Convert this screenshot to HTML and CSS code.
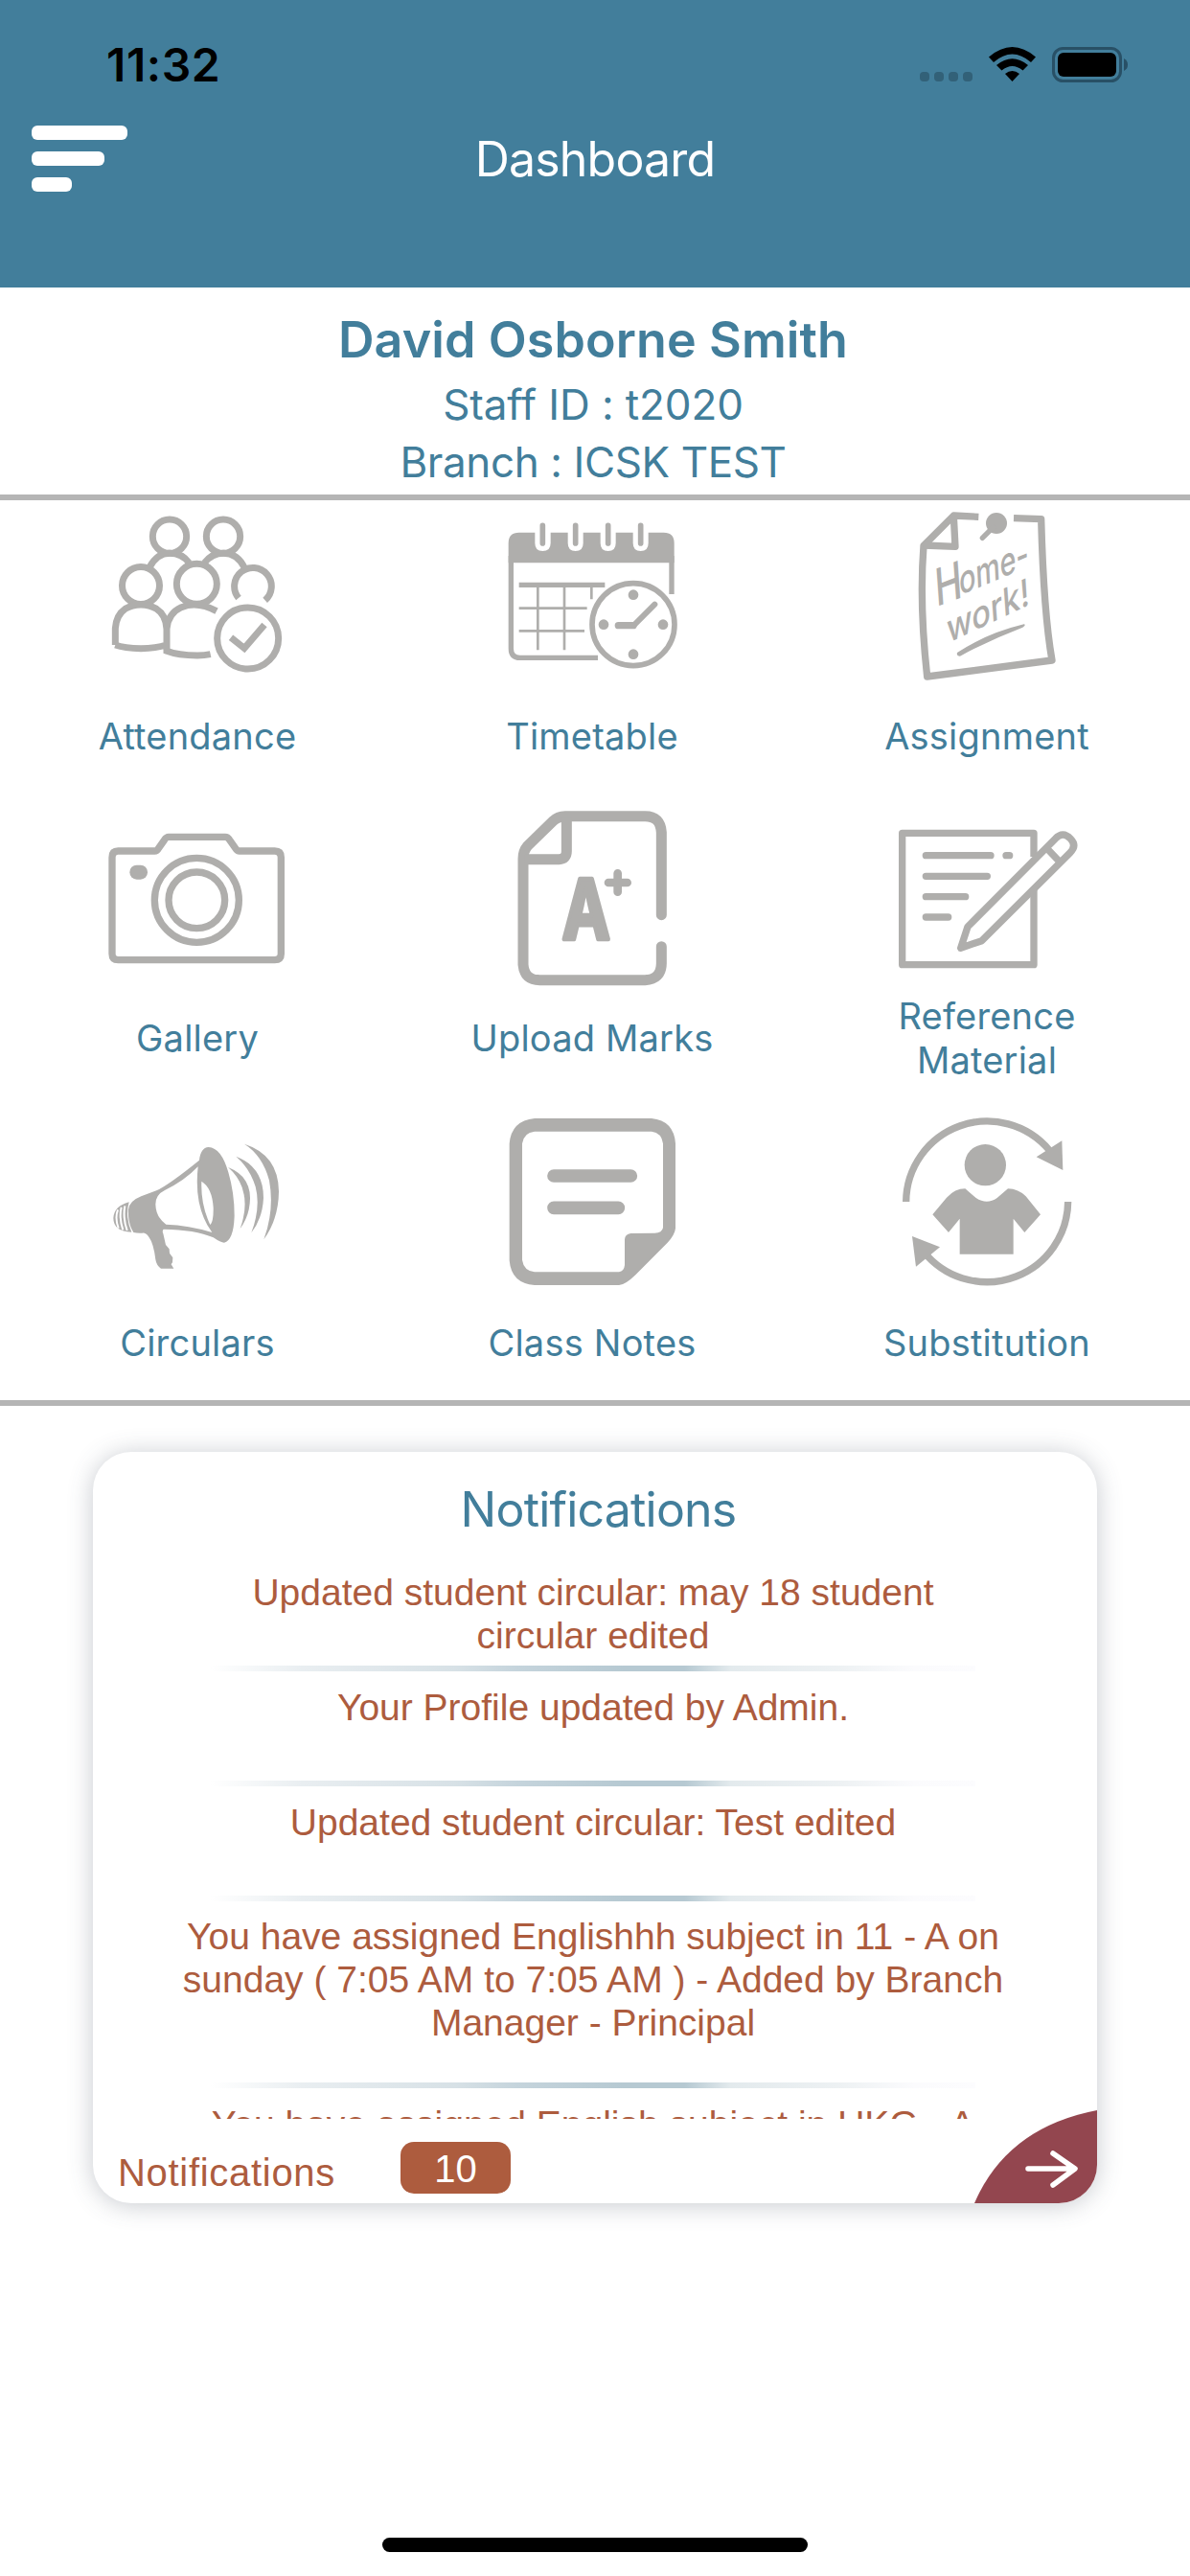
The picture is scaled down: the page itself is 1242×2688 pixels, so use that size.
FILE: index.html
```html
<!DOCTYPE html>
<html lang="en">
<head>
    <meta charset="UTF-8">
    <meta name="viewport" content="width=device-width, initial-scale=1.0">
    <title>Dashboard</title>
    <link rel="stylesheet" href="styles.css">
</head>
<body>
    <div class="screen">
        <header class="header">
            <div class="status-bar">
                <span class="time">11:32</span>
                <svg class="status-icons" width="220" height="40" viewBox="0 0 220 40">
                    <g fill="#326178">
                        <rect x="0" y="27" width="10" height="10" rx="4"/>
                        <rect x="15" y="27" width="10" height="10" rx="4"/>
                        <rect x="30" y="27" width="10" height="10" rx="4"/>
                        <rect x="45" y="27" width="10" height="10" rx="4"/>
                    </g>
                    <path d="M72 11.500Q96.500 -9.500 121 11.500L116 17Q96.500 0 77 17Z"/>
                    <path d="M80 20Q96.500 6.500 113 20L107.500 25.500Q96.500 16.500 85.500 25.500Z"/>
                    <path d="M89 29Q96.500 23 104 29L96.500 37Z"/>
                    <rect x="139.500" y="2.500" width="70" height="34" rx="10" fill="none" stroke="#285066" stroke-width="3"/>
                    <rect x="144" y="7" width="61" height="25" rx="6"/>
                    <path d="M213 13Q217 15 217 19.500Q217 24 213 26Z" fill="#285066"/>
                </svg>
            </div>
            <div class="nav-bar">
                <div class="menu">
                    <span></span>
                    <span></span>
                    <span></span>
                </div>
                <h1>Dashboard</h1>
            </div>
        </header>

        <section class="profile">
            <h2>David Osborne Smith</h2>
            <p class="staff">Staff ID : t2020</p>
            <p class="branch">Branch : ICSK TEST</p>
        </section>

        <main class="menu-grid">
            <a class="tile">
                <svg class="icon" viewBox="78 6 600 600">
                    <g class="line" stroke-width="21">
                        <circle cx="291" cy="119" r="53"/>
                        <circle cx="459" cy="119" r="53"/>
                        <path d="M228 216Q252 172 291 172Q330 172 352 202M400 202Q424 172 460 172Q502 172 525 216"/>
                        <circle cx="201" cy="273" r="58.500"/>
                        <circle cx="376" cy="268" r="63"/>
                        <path d="M507 312A58 58 0 1 1 590 319"/>
                        <path d="M121 459V407Q124 365 152 346Q174 333 201 333Q228 333 250 346Q280 365 282 409V478Q318 492 378 492Q400 492 419 488M282 409Q286 360 328 341Q378 321 438 353M121 459Q150 469 201 470Q250 469 280 459"/>
                        <circle cx="536" cy="438" r="96"/>
                        <path d="M483 436L525 469L588 396"/>
                    </g>
                </svg>
                <span class="label">Attendance</span>
            </a>
            <a class="tile">
                <svg class="icon" viewBox="84 6 600 600">
                    <path class="line" stroke-width="16" d="M130 180V470Q130 499 158 499H402M633 180V300"/>
                    <path class="fill" d="M122 202V140Q122 107 155 107H205V140Q205 165 229 165Q254 165 254 140V107H308V140Q308 165 332 165Q356 165 356 140V107H410V140Q410 165 434 165Q458 165 458 140V107H512V140Q512 165 536 165Q560 165 560 140V107H608Q641 107 641 140V202Z"/>
                    <path class="line round" stroke-width="17" d="M229 85V141M332 85V141M434 85V141M536 85V141"/>
                    <path class="line" stroke-width="16" d="M155 271H424"/>
                    <path class="line" stroke-width="8" d="M155 344H368M155 415H360M214 276V475M297 276V475M382 276V316"/>
                    <circle class="line" stroke-width="17" cx="513" cy="395" r="129"/>
                    <g class="fill">
                        <circle cx="513" cy="302" r="16"/>
                        <circle cx="420" cy="395" r="16"/>
                        <circle cx="606" cy="395" r="16"/>
                        <circle cx="513" cy="488" r="16"/>
                    </g>
                    <path class="line round" stroke-width="18" d="M580 332L515 397"/>
                    <path class="line round" stroke-width="22" d="M466 398H513"/>
                </svg>
                <span class="label">Timetable</span>
            </a>
            <a class="tile">
                <svg class="icon" viewBox="90 6 600 600">
                    <path class="line join" stroke-width="22" d="M364 58L286 54L192 148Q178 330 203 558L594 507Q568 360 560 65L474 62"/>
                    <path class="line join" stroke-width="22" d="M286 56L291 151L192 147"/>
                    <circle class="fill" cx="420" cy="78" r="33"/>
                    <path class="line round" stroke-width="16" d="M410 90L376 124"/>
                    <g class="hand">
                        <text font-size="164" textLength="84" transform="translate(232 340) skewY(-17) rotate(-4)" lengthAdjust="spacingAndGlyphs">H</text>
                        <text font-size="124" textLength="218" transform="translate(305 304) skewY(-20) rotate(-3)" lengthAdjust="spacingAndGlyphs">ome-</text>
                        <text font-size="122" textLength="258" transform="translate(268 454) skewY(-22) rotate(-4)" lengthAdjust="spacingAndGlyphs">work!</text>
                    </g>
                    <path class="fill" d="M297 483Q390 422 506 394Q514 396 502 404Q400 443 306 494Q294 494 297 483Z"/>
                </svg>
                <span class="label">Assignment</span>
            </a>
            <a class="tile">
                <svg class="icon" viewBox="78 21 600 600">
                    <g class="line" stroke-width="22">
                        <path d="M130 174H244Q252 174 256 166L275 139Q281 130 288 130H465Q473 130 478 138L499 168Q503 174 510 174H620Q640 174 640 194V496Q640 515 620 515H130Q111 515 111 496V194Q111 174 130 174Z"/>
                        <circle cx="376" cy="328" r="132"/>
                        <circle cx="376" cy="328" r="88"/>
                    </g>
                    <rect class="fill" x="166" y="218" width="56" height="45" rx="22"/>
                </svg>
                <span class="label">Gallery</span>
            </a>
            <a class="tile">
                <svg class="icon" viewBox="84 21 600 600">
                    <path class="line round" stroke-width="33" d="M601 374V116Q598 65 550 65H300Q276 66 262 80L182 158Q168 174 168 198V530Q172 578 220 578H550Q600 576 601 526V473"/>
                    <path class="line" stroke-width="33" d="M304 70V175Q304 199 280 200H172"/>
                    <text class="grade" x="290" y="449" font-size="258" textLength="150" lengthAdjust="spacingAndGlyphs">A</text>
                    <path class="line round" stroke-width="26" d="M464 244V302M435 273H494"/>
                </svg>
                <span class="label">Upload Marks</span>
            </a>
            <a class="tile">
                <svg class="icon" viewBox="90 21 600 600">
                    <g class="line join" stroke-width="22">
                        <path d="M537 192V118H125V530H537V294"/>
                        <path d="M308 478L330 411L604 136Q628 110 652 136Q673 158 650 180L374 455ZM580 168L615 205"/>
                    </g>
                    <path class="line round" stroke-width="22" d="M199 188H402M450 188H461M199 253H391M199 317H323M199 381H269"/>
                </svg>
                <span class="label">Reference<br>Material</span>
            </a>
            <a class="tile">
                <svg class="icon" viewBox="78 15 600 600">
                    <g class="fill">
                        <path fill-rule="evenodd" d="M384 182Q388 143 413 141Q453 143 475 220Q494 285 494 355Q492 432 462 440Q451 440 428 424Q370 399 272 398Q267 403 271 412L279 447L290 460L291 473L301 487L300 502L296 508L304 521H264Q250 512 247 493Q241 442 226 422Q216 408 205 410Q190 411 178 408Q160 380 162 337Q164 310 202 295L250 277Q290 258 384 182ZM380 202Q338 246 276 276Q247 290 247 320Q248 360 280 383Q350 385 424 408Q366 330 380 202ZM391 248Q388 320 418 384Q429 374 428 330Q424 268 391 248Z"/>
                        <path d="M164 313Q151 359 172 407Q115 405 115 363Q117 326 164 313Z"/>
                        <path d="M474 204Q544 232 543 302Q542 355 512 396Q538 324 518 267Q505 231 474 204Z"/>
                        <path d="M499 170Q585 204 585 300Q582 364 547 409Q577 330 560 265Q542 207 499 170Z"/>
                        <path d="M525 131Q632 165 633 280Q632 367 586 430Q620 338 603 245Q582 167 525 131Z"/>
                    </g>
                    <path d="M129 337Q119 363 131 395M140 329Q132 362 145 400M151 325Q144 363 158 402" fill="none" stroke="#fff" stroke-width="6"/>
                </svg>
                <span class="label">Circulars</span>
            </a>
            <a class="tile">
                <svg class="icon" viewBox="84 15 600 600">
                    <path class="fill" fill-rule="evenodd" d="M204 51H570Q640 58 645 130V395Q643 415 620 440L520 541Q485 575 466 573H204Q131 568 125 496V130Q131 58 204 51ZM204 92Q170 95 165 130V494Q170 528 204 532H468Q484 530 486 510V430Q487 413 505 411L580 410Q603 410 606 393V130Q602 96 570 92Z"/>
                    <path class="line round" stroke-width="41" d="M264 231H505M264 331H466"/>
                </svg>
                <span class="label">Class Notes</span>
            </a>
            <a class="tile">
                <svg class="icon" viewBox="90 15 600 600">
                    <path class="line" stroke-width="22" d="M137 312A254 254 0 0 1 585 150M644 312A254 254 0 0 1 204 482"/>
                    <g class="fill">
                        <path d="M625 121L628 213L545 172Z"/>
                        <path d="M156 420L243 454L168 515Z"/>
                        <circle cx="385" cy="197" r="65"/>
                        <path d="M322 271L356 300Q390 323 422 300L456 271Q489 272 512 295L558 352L508 408L473 365V476H305V365L270 408L220 352L264 299Q290 271 322 271Z"/>
                    </g>
                </svg>
                <span class="label">Substitution</span>
            </a>
        </main>

        <section class="card">
            <h3>Notifications</h3>
            <ul class="list">
                <li>Updated student circular: may 18 student<br>circular edited</li>
                <li>Your Profile updated by Admin.</li>
                <li>Updated student circular: Test edited</li>
                <li class="tall">You have assigned Englishhh subject in 11 - A on<br>sunday ( 7:05 AM to 7:05 AM ) - Added by Branch<br>Manager - Principal</li>
                <li>You have assigned English subject in UKG - A</li>
            </ul>
            <div class="card-footer">
                <span class="footer-label">Notifications</span>
                <span class="count">10</span>
            </div>
            <svg class="corner" width="128" height="97" viewBox="0 0 128 97">
                <path d="M0 97Q34 18 128 0V97Z" fill="#93464f"/>
                <path d="M56 61H104M82 45L105 61L82 78" fill="none" stroke="#fff" stroke-width="5.500" stroke-linecap="round" stroke-linejoin="round"/>
            </svg>
        </section>

        <div class="home-indicator"></div>
    </div>
</body>
</html>
```
FILE: styles.css
```css
* {
    margin: 0;
    padding: 0;
    box-sizing: border-box;
}

body {
    font-family: Inter, "Liberation Sans", sans-serif;
    background-color: #fff;
    color: #427e9b;
}

.screen {
    width: 1242px;
    height: 2688px;
    display: flex;
    flex-direction: column;
    overflow: hidden;
}

.header {
    height: 300px;
    background-color: #427e9b;
}

.status-bar {
    height: 131px;
    padding: 48px 62px 0 111px;
    display: flex;
    justify-content: space-between;
    color: #000;
}

.time {
    font-size: 48px;
    font-weight: 600;
    line-height: 40px;
    letter-spacing: 0.6px;
}

.nav-bar {
    display: grid;
    grid-template-columns: 200px 1fr 200px;
}

.menu {
    display: flex;
    flex-direction: column;
    gap: 12px;
    padding-left: 33px;
}

.menu span {
    width: 100px;
    height: 15px;
    border-radius: 6px;
    background-color: #fff;
}

.menu span:nth-child(2) {
    width: 76px;
}

.menu span:nth-child(3) {
    width: 42px;
}

h1 {
    font-size: 50px;
    font-weight: 400;
    line-height: 70px;
    letter-spacing: -0.8px;
    text-align: center;
    color: #fff;
}

.profile {
    height: 222px;
    padding-top: 24px;
    border-bottom: 6px solid #b5b5b5;
    text-align: center;
}

.profile h2 {
    padding-right: 4px;
    font-size: 52px;
    font-weight: 600;
    line-height: 62px;
    letter-spacing: 0.1px;
}

.profile p {
    padding-right: 4px;
    font-size: 44px;
    line-height: 60px;
    letter-spacing: -0.1px;
}

.profile .staff {
    margin-top: 6px;
}

.profile .branch {
    letter-spacing: -0.4px;
}

.menu-grid {
    display: grid;
    grid-template-columns: repeat(3, 412px);
    grid-template-rows: 315px 318px 306px;
    height: 945px;
    border-bottom: 6px solid #b5b5b5;
}

.tile {
    display: flex;
    flex-direction: column;
    align-items: center;
}

.icon {
    width: 200px;
    height: 200px;
}

.line {
    fill: none;
    stroke: #afaeac;
}

.fill {
    fill: #afaeac;
}

.round {
    stroke-linecap: round;
    stroke-linejoin: round;
}

.join {
    stroke-linejoin: round;
}

.hand {
    font-family: Inter, sans-serif;
    font-weight: 500;
    fill: #afaeac;
}

.grade {
    font-family: Inter, sans-serif;
    font-weight: 700;
    fill: #afaeac;
    stroke: #afaeac;
    stroke-width: 14px;
    stroke-linejoin: round;
}

.label {
    height: 92px;
    display: flex;
    align-items: center;
    text-align: center;
    font-size: 38px;
    line-height: 46px;
    letter-spacing: 0.2px;
}

.card {
    position: relative;
    width: 1048px;
    height: 784px;
    margin: 48px 0 0 97px;
    border-radius: 40px;
    background-color: #fff;
    box-shadow: 0 2px 26px rgba(70, 80, 95, 0.3);
    overflow: hidden;
}

.card h3 {
    height: 109px;
    padding: 24px 0 0 7px;
    font-size: 50px;
    font-weight: 400;
    line-height: 72px;
    letter-spacing: -0.8px;
    text-align: center;
}

.list {
    height: 587px;
    margin-right: 4px;
    overflow: hidden;
    list-style: none;
    font-family: "Liberation Sans", Arial, sans-serif;
    font-size: 39px;
    line-height: 45px;
    text-align: center;
    white-space: nowrap;
    color: #ad5c3e;
}

.list li {
    height: 120px;
    padding-top: 15px;
    background: linear-gradient(90deg, #fff, #e9eef1 12%, #d7e1e6 32%, #c5d4dc 40%, #b6c9d2 54%, #b6c9d2 62%, #e3eaed 68%, #edf1f3 82%, #fbfbfd 92%, #fcfcfe) center bottom / 798px 6px no-repeat;
}

.list .tall {
    height: 195px;
    padding-top: 14px;
}

.card-footer {
    display: flex;
    padding: 24px 0 0 25px;
    font-family: "Liberation Sans", Arial, sans-serif;
    font-size: 40px;
    color: #ad5c3e;
}

.footer-label {
    width: 296px;
    padding: 6px 0 0 1px;
    line-height: 52px;
    letter-spacing: 0.7px;
}

.count {
    width: 115px;
    height: 54px;
    border-radius: 14px;
    background-color: #ad5c3e;
    color: #fff;
    line-height: 56px;
    text-align: center;
}

.corner {
    position: absolute;
    right: 0;
    bottom: 0;
}

.home-indicator {
    width: 444px;
    height: 15px;
    margin: 349px auto 0;
    border-radius: 8px;
    background-color: #000;
}
```
